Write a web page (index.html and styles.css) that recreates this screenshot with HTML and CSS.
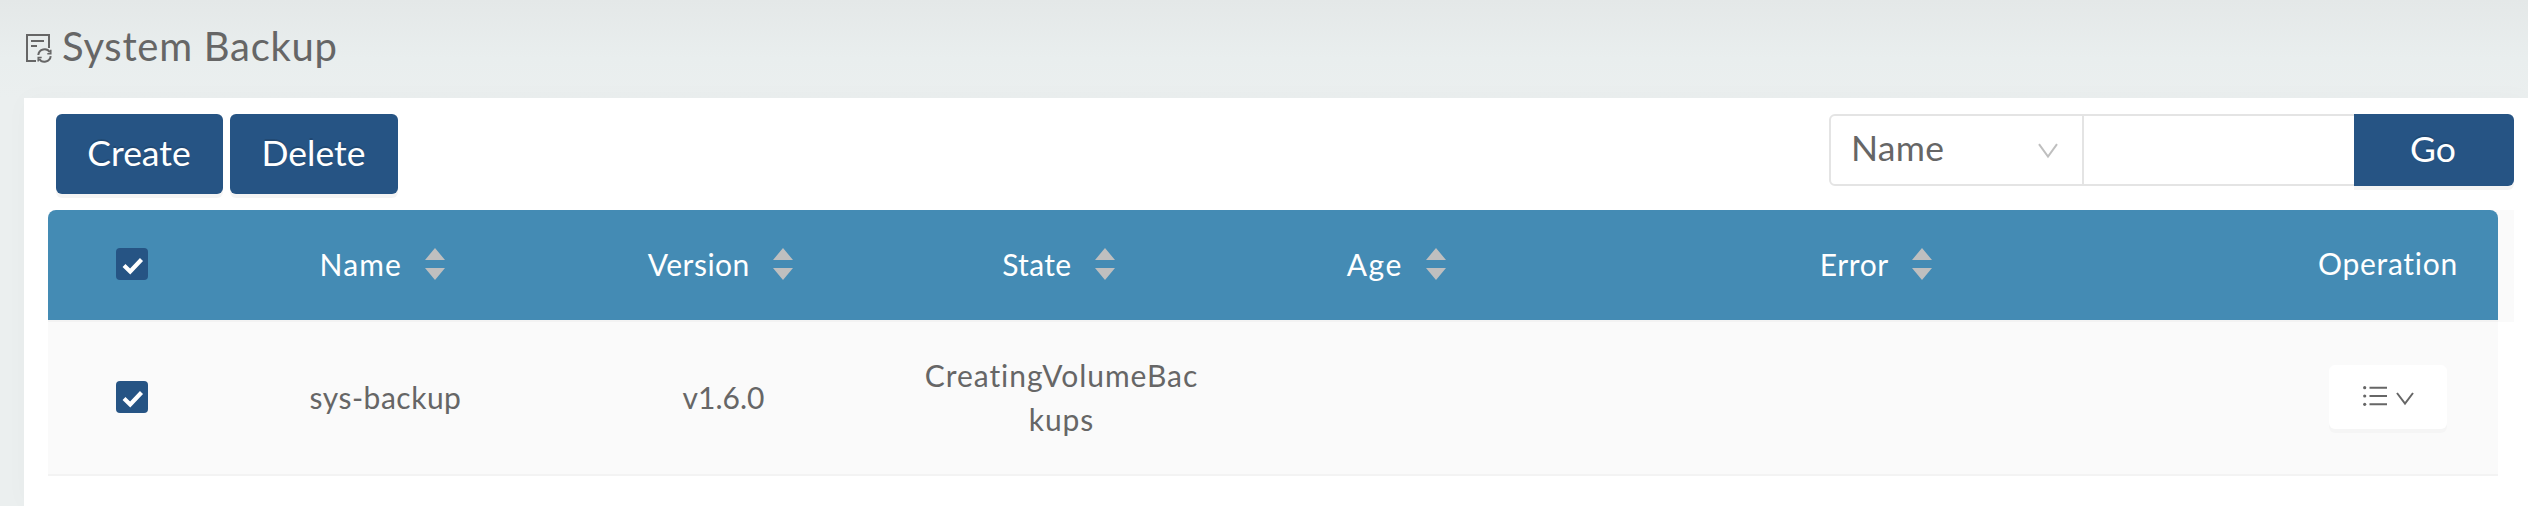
FILE: index.html
```html
<!DOCTYPE html>
<html lang="en">
<head>
<meta charset="utf-8">
<title>System Backup</title>
<link rel="stylesheet" href="styles.css">
</head>
<body>
<header class="page-head">
  <svg class="page-icon" viewBox="0 0 28 30" fill="none" stroke="currentColor" stroke-width="2">
    <path d="M11 28H2V2h22v13"/>
    <path d="M6 8h13M6 13h6"/>
    <path d="M13.300 22a6.300 6.300 0 0 1 11.600-2.700M25.700 23.200a6.300 6.300 0 0 1-11.600 2.500"/>
    <path d="M25.800 16.800v4h-3.500M13.200 28.400v-4h3.500" stroke-width="1.500"/>
  </svg>
  <h1 class="page-title">System Backup</h1>
</header>
<main class="panel">
  <div class="toolbar">
    <div class="actions">
      <button class="btn btn-create"><span>Create</span></button>
      <button class="btn btn-delete"><span>Delete</span></button>
    </div>
    <div class="search">
      <div class="select"><span class="select-text">Name</span>
        <svg class="select-arrow" viewBox="0 0 20 16" fill="none" stroke="currentColor" stroke-width="2"><path d="M1 1.2l9 12.3 9-12.3"/></svg>
      </div>
      <input class="search-input" type="text" aria-label="Search">
      <button class="btn btn-go"><span>Go</span></button>
    </div>
  </div>
  <div class="table">
    <div class="row head">
      <div class="cell"><span class="check"><svg viewBox="0 0 32 32"><path d="M8 17.500l6.200 6L25.500 11.500"/></svg></span></div>
      <div class="cell"><span class="t-name">Name</span><svg class="sort" viewBox="0 0 20 32"><path d="M10 0l10 12H0zM10 32L0 20h20z"/></svg></div>
      <div class="cell"><span class="t-version">Version</span><svg class="sort" viewBox="0 0 20 32"><path d="M10 0l10 12H0zM10 32L0 20h20z"/></svg></div>
      <div class="cell"><span class="t-state">State</span><svg class="sort" viewBox="0 0 20 32"><path d="M10 0l10 12H0zM10 32L0 20h20z"/></svg></div>
      <div class="cell"><span class="t-age">Age</span><svg class="sort" viewBox="0 0 20 32"><path d="M10 0l10 12H0zM10 32L0 20h20z"/></svg></div>
      <div class="cell"><span class="t-error">Error</span><svg class="sort" viewBox="0 0 20 32"><path d="M10 0l10 12H0zM10 32L0 20h20z"/></svg></div>
      <div class="cell op"><span class="t-op">Operation</span></div>
    </div>
    <div class="row body">
      <div class="cell"><span class="check"><svg viewBox="0 0 32 32"><path d="M8 17.500l6.200 6L25.500 11.500"/></svg></span></div>
      <div class="cell"><span class="t-sys">sys-backup</span></div>
      <div class="cell"><span class="t-ver">v1.6.0</span></div>
      <div class="cell"><span class="t-creating">CreatingVolumeBac<br>kups</span></div>
      <div class="cell"></div>
      <div class="cell"></div>
      <div class="cell op">
        <button class="menu-btn">
          <svg class="list" viewBox="0 0 24 20"><path d="M6.500 .7H24v2H6.500zM6.500 9H24v2H6.500zM6.500 17.300H24v2H6.500z"/><circle cx="1.700" cy="1.700" r="1.600"/><circle cx="1.700" cy="10" r="1.600"/><circle cx="1.700" cy="18.300" r="1.600"/></svg>
          <svg class="caret" viewBox="0 0 18 14" fill="none" stroke="currentColor" stroke-width="2"><path d="M1 1l8 10.500L17 1"/></svg>
        </button>
      </div>
    </div>
  </div>
</main>
</body>
</html>
```
FILE: styles.css
```css
* { box-sizing: border-box; }
body {
  margin: 0;
  height: 506px;
  overflow: hidden;
  background: #ebefef;
  color: #666;
  font-family: Lato, "Liberation Sans", sans-serif;
  font-size: 30px;
}
svg { display: block; flex: none; }
button { margin: 0; border: 0; font: inherit; }
.page-head {
  display: flex;
  height: 98px;
  padding: 20px 0 0 25px;
  background: linear-gradient(#e4e8e8, #e9eeee 60%, #ebefef);
}
.page-icon { width: 28px; height: 30px; margin-top: 13px; }
.page-title {
  margin: 1px 0 0 9px;
  font-size: 40px;
  font-weight: 400;
  line-height: 50px;
  letter-spacing: .72px;
  white-space: nowrap;
}
.panel {
  height: 408px;
  margin-left: 24px;
  padding-top: 16px;
  background: #fff;
  box-shadow: 0 0 24px rgba(0, 20, 20, .025);
}
.toolbar {
  display: flex;
  justify-content: space-between;
  height: 96px;
  padding: 0 14px 0 32px;
}
.actions { display: flex; gap: 7px; }
.btn {
  height: 80px;
  padding: 0 0 4px;
  border-radius: 6px;
  background: #265484;
  box-shadow: 0 4px 0 rgba(0, 0, 0, .043);
  color: #fff;
  font-size: 35.500px;
  text-shadow: 0 -2px 0 rgba(0, 0, 0, .12);
}
.btn-create { width: 167px; padding-right: 1px; }
.btn-delete { width: 168px; padding-right: 1px; }
.search { display: flex; height: 72px; }
.select {
  display: flex;
  align-items: center;
  justify-content: space-between;
  width: 255px;
  padding: 0 24px 6px 20px;
  border: 2px solid #e4e4e4;
  border-radius: 6px 0 0 6px;
  font-size: 35.500px;
}
.select-text { letter-spacing: .3px; }
.select-arrow { width: 20px; height: 16px; margin-top: 7px; color: #bfbfbf; }
.search-input {
  width: 270px;
  border: 2px solid #e4e4e4;
  border-width: 2px 0;
  outline: 0;
  background: #fff;
}
.btn-go { width: 160px; height: 72px; padding: 0 2px 4px 0; border-radius: 0 6px 6px 0; }
.table {
  margin: 0 14px 0 24px;
  background: linear-gradient(#fafafa, #fafafa) right top / 24px 112px no-repeat;
}
.row {
  display: grid;
  grid-template-columns: 168px 339px 337px 339px 337px 622px 308px;
  width: 2450px;
}
.cell {
  display: flex;
  align-items: center;
  justify-content: center;
  text-align: center;
  line-height: 44px;
  white-space: nowrap;
}
.op { padding-left: 88px; }
.head {
  height: 110px;
  padding-bottom: 2px;
  border-radius: 8px 8px 0 0;
  background: #448bb4;
  color: #fff;
}
.body {
  height: 156px;
  padding-bottom: 2px;
  border-top: 2px solid #f3f3f3;
  border-bottom: 2px solid #f3f3f3;
  background: #fafafa;
}
.check { width: 32px; height: 32px; border-radius: 4px; background: #265484; }
.check path { fill: none; stroke: #fff; stroke-width: 4.200; }
.sort { width: 20px; height: 32px; margin: 0 6px 0 23.500px; fill: #bfbfbf; }
.t-name { letter-spacing: 1.100px; }
.t-version { letter-spacing: .5px; }
.t-state { letter-spacing: .3px; }
.t-age { letter-spacing: 1.500px; }
.t-error { letter-spacing: .6px; }
.t-op { padding-bottom: 2px; letter-spacing: .7px; }
.t-sys { letter-spacing: .5px; }
.t-ver { letter-spacing: .05px; }
.t-creating { letter-spacing: .95px; }
.menu-btn {
  display: flex;
  align-items: center;
  gap: 9px;
  width: 118px;
  height: 64px;
  padding: 0 0 2px 34px;
  border-radius: 6px;
  background: #fff;
  box-shadow: 0 4px 0 rgba(0, 0, 0, .018);
  color: #666;
}
.list { width: 24px; height: 20px; fill: currentColor; }
.caret { width: 18px; height: 14px; margin-top: 5px; }
```
